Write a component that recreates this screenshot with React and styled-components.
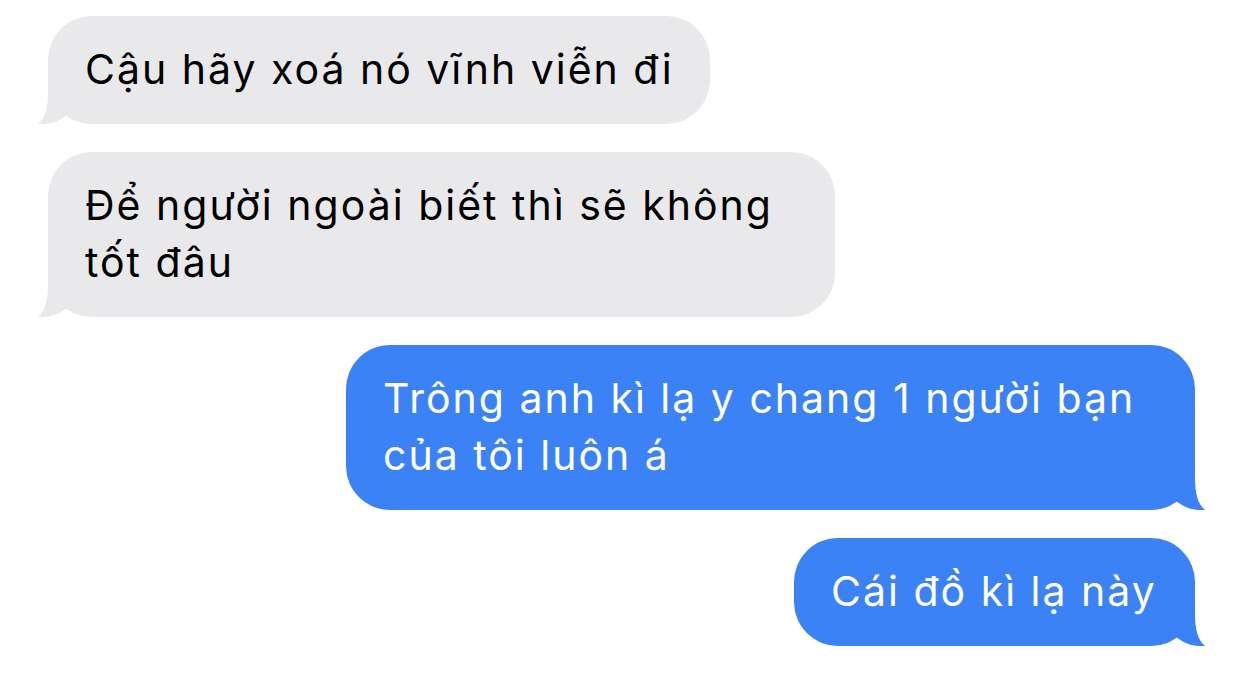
import React from 'react';
import styled, { createGlobalStyle } from 'styled-components';

const GlobalStyle = createGlobalStyle`
  html, body {
    margin: 0;
    padding: 0;
    background: #ffffff;
  }
  body {
    font-family: Inter, "Noto Sans", "Liberation Sans", sans-serif;
    -webkit-font-smoothing: antialiased;
  }
`;

const Thread = styled.div`
  width: 1242px;
  height: 695px;
  box-sizing: border-box;
  padding: 16px 47px 0 48px;
  display: flex;
  flex-direction: column;
  gap: 28px;
  overflow: hidden;
`;

const Row = styled.div`
  display: flex;
  justify-content: ${p => (p.$mine ? 'flex-end' : 'flex-start')};
`;

const Bubble = styled.div`
  position: relative;
  box-sizing: border-box;
  padding: 25px 30px 26px 37px;
  border-radius: 44px;
  background: ${p => (p.$mine ? '#3b82f6' : '#e9e9eb')};
  color: ${p => (p.$mine ? '#ffffff' : '#000000')};
  font-size: 41px;
  line-height: 57px;
  letter-spacing: 2px;
  white-space: nowrap;
`;

const Tail = styled.svg`
  position: absolute;
  bottom: 0;
  width: 40px;
  height: 50px;
  ${p => (p.$mine ? 'right: -10px; transform: scaleX(-1);' : 'left: -10px;')}
`;

function BubbleTail({ mine }) {
  return (
    <Tail $mine={mine} viewBox="0 0 40 50">
      <path
        d="M10 0 L10 18 C10 34 7 44 0 50 C12 51 22 47 30 40 L30 0 Z"
        fill={mine ? '#3b82f6' : '#e9e9eb'}
      />
    </Tail>
  );
}

const messages = [
  { mine: false, w: 662, lines: ['Cậu hãy xoá nó vĩnh viễn đi'] },
  { mine: false, w: 787, lines: ['Để người ngoài biết thì sẽ không', 'tốt đâu'] },
  { mine: true, w: 849, lines: ['Trông anh kì lạ y chang 1 người bạn', 'của tôi luôn á'] },
  { mine: true, w: 401, lines: ['Cái đồ kì lạ này'] },
];

export default function App() {
  return (
    <>
      <GlobalStyle />
      <Thread>
        {messages.map((m, i) => (
          <Row key={i} $mine={m.mine}>
            <Bubble $mine={m.mine} style={{ width: m.w }}>
              {m.lines.map((l, j) => (
                <div key={j}>{l}</div>
              ))}
              <BubbleTail mine={m.mine} />
            </Bubble>
          </Row>
        ))}
      </Thread>
    </>
  );
}
